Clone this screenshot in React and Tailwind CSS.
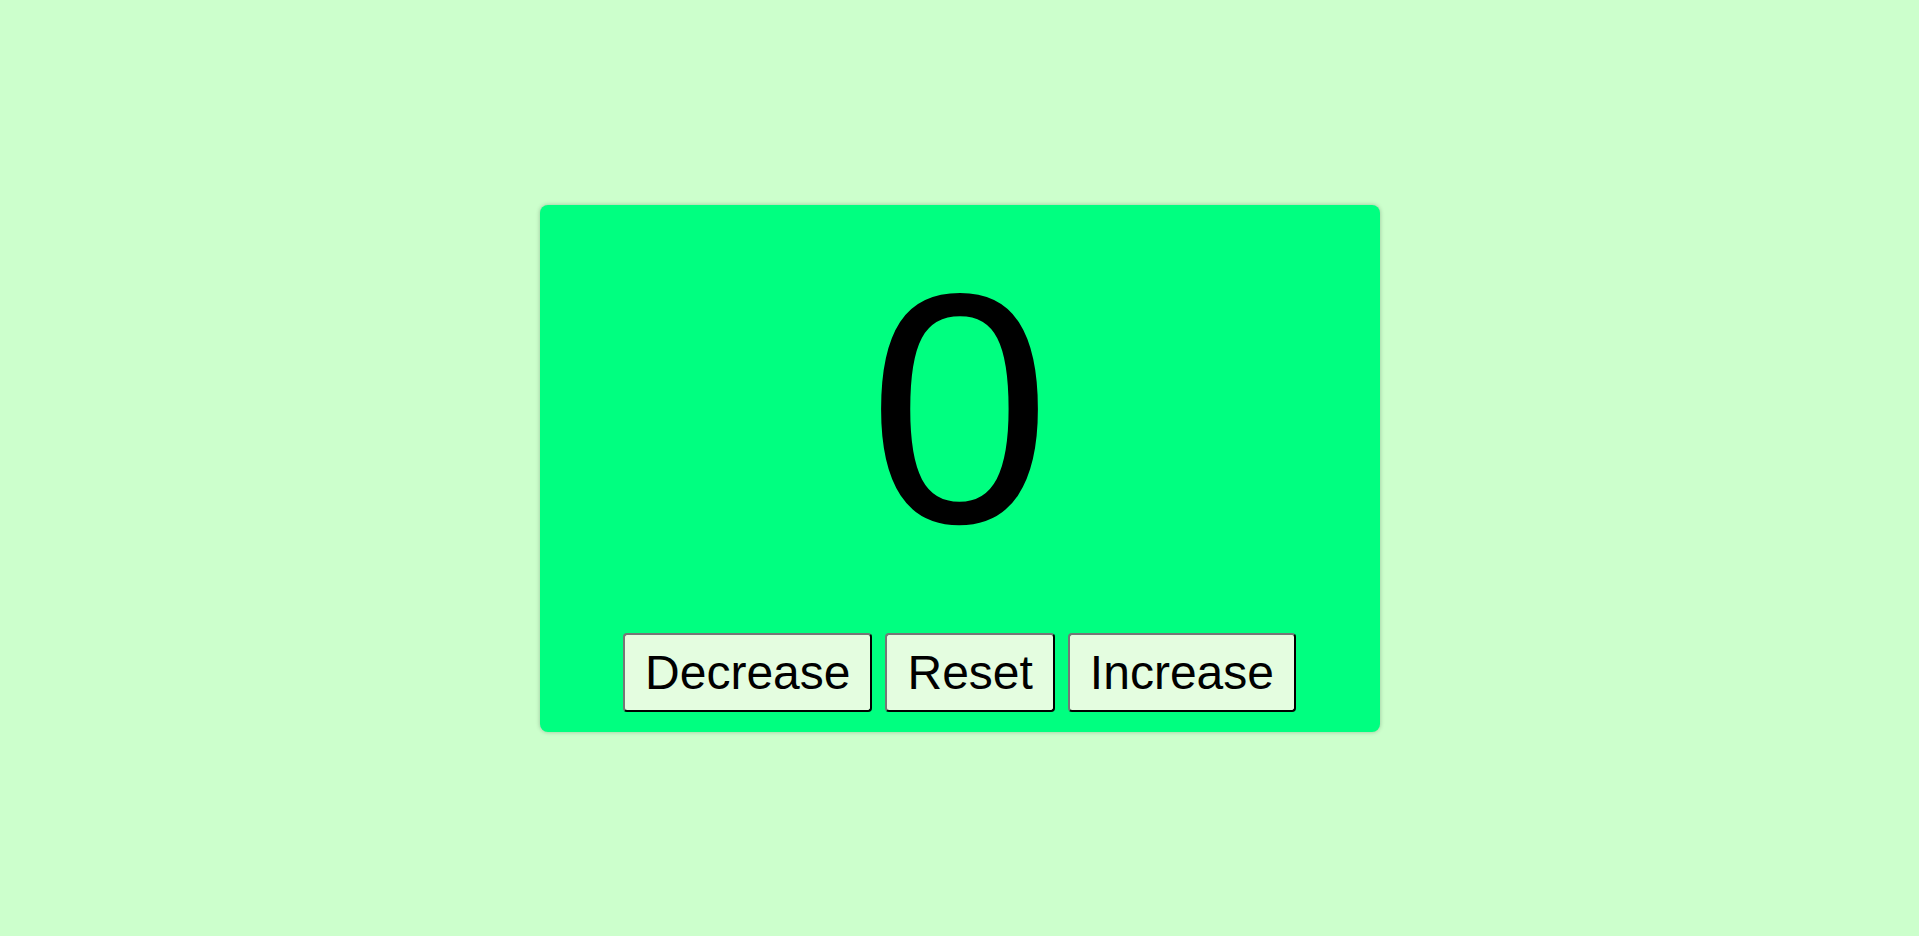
import React, { useState } from 'react';

const btn =
  'bg-[#e4fde0] text-black text-[48px] leading-[1.15] px-[20px] py-[10px] border-2 border-[#222] [border-style:outset] rounded-[4px] cursor-pointer';

export default function App() {
  const [count, setCount] = useState(0);

  return (
    <div className="min-h-screen w-full bg-[#ccffcc] flex items-center justify-center font-['Liberation_Sans',Arial,sans-serif]">
      <div className="w-[840px] h-[527px] bg-[#00ff80] rounded-[8px] shadow-[0_0_4px_rgba(0,0,0,0.25)] flex flex-col items-center pt-[20px]">
        <h1 className="text-[328px] leading-[368px] font-normal text-black">{count}</h1>
        <div className="mt-[40px] flex gap-[13px]">
          <button className={btn} onClick={() => setCount(count - 1)}>Decrease</button>
          <button className={btn} onClick={() => setCount(0)}>Reset</button>
          <button className={btn} onClick={() => setCount(count + 1)}>Increase</button>
        </div>
      </div>
    </div>
  );
}
